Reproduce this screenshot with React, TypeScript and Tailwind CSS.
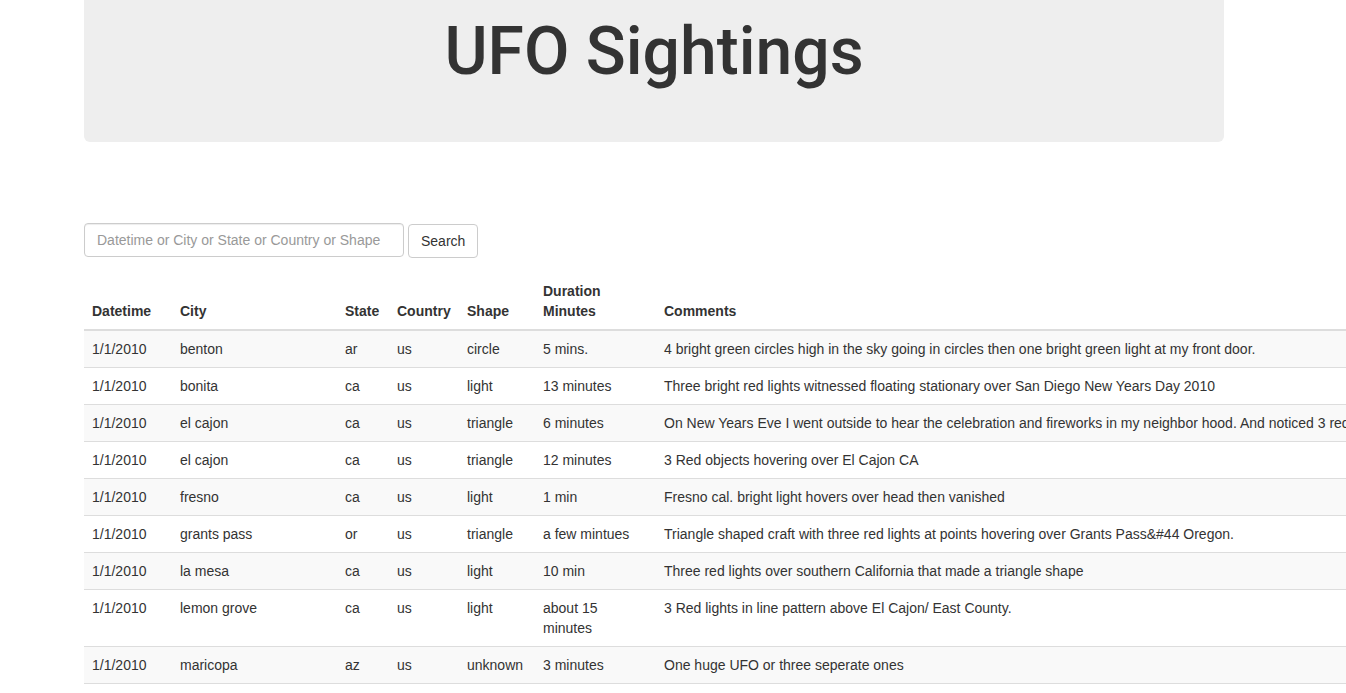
import React from 'react';

interface Sighting {
  datetime: string;
  city: string;
  state: string;
  country: string;
  shape: string;
  duration: string;
  comments: string;
}

const sightings: Sighting[] = [
  { datetime: '1/1/2010', city: 'benton', state: 'ar', country: 'us', shape: 'circle', duration: '5 mins.', comments: '4 bright green circles high in the sky going in circles then one bright green light at my front door.' },
  { datetime: '1/1/2010', city: 'bonita', state: 'ca', country: 'us', shape: 'light', duration: '13 minutes', comments: 'Three bright red lights witnessed floating stationary over San Diego New Years Day 2010' },
  { datetime: '1/1/2010', city: 'el cajon', state: 'ca', country: 'us', shape: 'triangle', duration: '6 minutes', comments: 'On New Years Eve I went outside to hear the celebration and fireworks in my neighbor hood. And noticed 3 red lights in the sky.' },
  { datetime: '1/1/2010', city: 'el cajon', state: 'ca', country: 'us', shape: 'triangle', duration: '12 minutes', comments: '3 Red objects hovering over El Cajon CA' },
  { datetime: '1/1/2010', city: 'fresno', state: 'ca', country: 'us', shape: 'light', duration: '1 min', comments: 'Fresno cal. bright light hovers over head then vanished' },
  { datetime: '1/1/2010', city: 'grants pass', state: 'or', country: 'us', shape: 'triangle', duration: 'a few mintues', comments: 'Triangle shaped craft with three red lights at points hovering over Grants Pass&#44 Oregon.' },
  { datetime: '1/1/2010', city: 'la mesa', state: 'ca', country: 'us', shape: 'light', duration: '10 min', comments: 'Three red lights over southern California that made a triangle shape' },
  { datetime: '1/1/2010', city: 'lemon grove', state: 'ca', country: 'us', shape: 'light', duration: 'about 15 minutes', comments: '3 Red lights in line pattern above El Cajon/ East County.' },
  { datetime: '1/1/2010', city: 'maricopa', state: 'az', country: 'us', shape: 'unknown', duration: '3 minutes', comments: 'One huge UFO or three seperate ones' },
  { datetime: '1/1/2010', city: 'mesa', state: 'az', country: 'us', shape: 'light', duration: '5 minutes', comments: 'Orange lights moving across the sky' },
];

export default function App() {
  return (
    <div className="min-h-screen overflow-hidden bg-white text-[14px] leading-[20px] text-[#333] font-['Liberation_Sans',Arial,sans-serif]">
      <div className="pl-[84px]">
        {/* Header */}
        <div className="w-[1140px] rounded-b-[6px] bg-[#eee] h-[142px] flex justify-center">
          <h1 className="mt-[17px] text-[66px] leading-[69px] font-medium font-['Roboto',sans-serif]">UFO Sightings</h1>
        </div>

        {/* Search */}
        <div className="mt-[80px] flex items-center gap-[4px]">
          <input
            type="text"
            placeholder="Datetime or City or State or Country or Shape"
            className="w-[320px] h-[34px] rounded-[4px] border border-[#ccc] px-[12px] text-[14px] text-[#555] placeholder:text-[#999] shadow-[inset_0_1px_1px_rgba(0,0,0,0.075)] outline-none"
          />
          <button className="mt-[2px] h-[34px] rounded-[4px] border border-[#ccc] bg-white px-[12px] text-[14px] text-[#333]">
            Search
          </button>
        </div>

        {/* Table */}
        <table className="mt-[15px] w-[1400px] border-collapse text-left table-fixed">
          <colgroup>
            <col className="w-[88px]" />
            <col className="w-[165px]" />
            <col className="w-[52px]" />
            <col className="w-[70px]" />
            <col className="w-[76px]" />
            <col className="w-[121px]" />
            <col />
          </colgroup>
          <thead>
            <tr className="border-b-2 border-[#ddd]">
              <th className="p-[8px] align-bottom font-bold">Datetime</th>
              <th className="p-[8px] align-bottom font-bold">City</th>
              <th className="p-[8px] align-bottom font-bold">State</th>
              <th className="p-[8px] align-bottom font-bold">Country</th>
              <th className="p-[8px] align-bottom font-bold">Shape</th>
              <th className="p-[8px] align-bottom font-bold">Duration<br />Minutes</th>
              <th className="p-[8px] align-bottom font-bold">Comments</th>
            </tr>
          </thead>
          <tbody>
            {sightings.map((s, i) => (
              <tr key={i} className={`border-t border-[#ddd] ${i % 2 === 0 ? 'bg-[#f9f9f9]' : 'bg-white'}`}>
                <td className="p-[8px] align-top">{s.datetime}</td>
                <td className="p-[8px] align-top">{s.city}</td>
                <td className="p-[8px] align-top">{s.state}</td>
                <td className="p-[8px] align-top">{s.country}</td>
                <td className="p-[8px] align-top">{s.shape}</td>
                <td className="p-[8px] align-top">{s.duration}</td>
                <td className="p-[8px] align-top whitespace-nowrap">{s.comments}</td>
              </tr>
            ))}
          </tbody>
        </table>
      </div>
    </div>
  );
}
